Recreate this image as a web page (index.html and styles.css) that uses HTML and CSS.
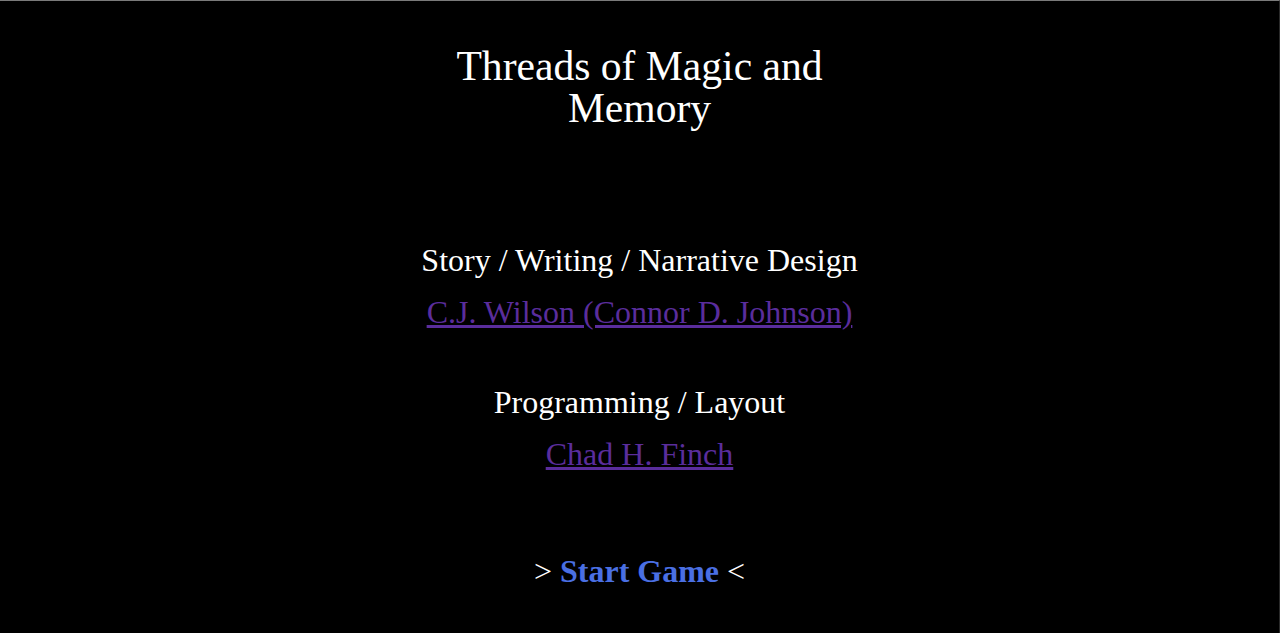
FILE: index.html
```html
<!DOCTYPE html>
<html>
<head>
<meta charset="utf-8">
<title>Threads of Magic and Memory</title>
<link rel="stylesheet" href="styles.css">
</head>
<body>
<main class="screen">
  <h1 class="title">Threads of Magic and Memory</h1>
  <section class="credits">
    <div class="credit">
      <p class="role">Story / Writing / Narrative Design</p>
      <a class="name" href="#">C.J. Wilson (Connor D. Johnson)</a>
    </div>
    <div class="credit">
      <p class="role">Programming / Layout</p>
      <a class="name" href="#">Chad H. Finch</a>
    </div>
  </section>
  <p class="start">&gt; <a class="start-link" href="#">Start Game</a> &lt;</p>
</main>
</body>
</html>
```
FILE: styles.css
```css
html, body {
  margin: 0;
  padding: 0;
  background: #000;
  height: 100%;
}
body {
  border-top: 1px solid #7a7a7a;
  border-right: 1px solid #2a2a2a;
  box-sizing: border-box;
  font-family: "Liberation Serif", "Times New Roman", serif;
  color: #fff;
}
.screen {
  display: flex;
  flex-direction: column;
  align-items: center;
  text-align: center;
}
.title {
  margin: 44px 0 0;
  width: 420px;
  font-size: 41.6px;
  font-weight: normal;
  line-height: 42px;
}
.credits {
  margin-top: 113px;
  display: flex;
  flex-direction: column;
  gap: 54px;
}
.credit {
  display: flex;
  flex-direction: column;
  align-items: center;
  gap: 16px;
}
.role {
  margin: 0;
  font-size: 32px;
  line-height: 36px;
}
.name {
  font-size: 32px;
  line-height: 36px;
  color: #5a2d9c;
  text-decoration: underline;
}
.start {
  margin: 81px 0 0;
  font-size: 32px;
  line-height: 36px;
}
.start-link {
  color: #4a6fe3;
  font-weight: bold;
  text-decoration: none;
}
```
